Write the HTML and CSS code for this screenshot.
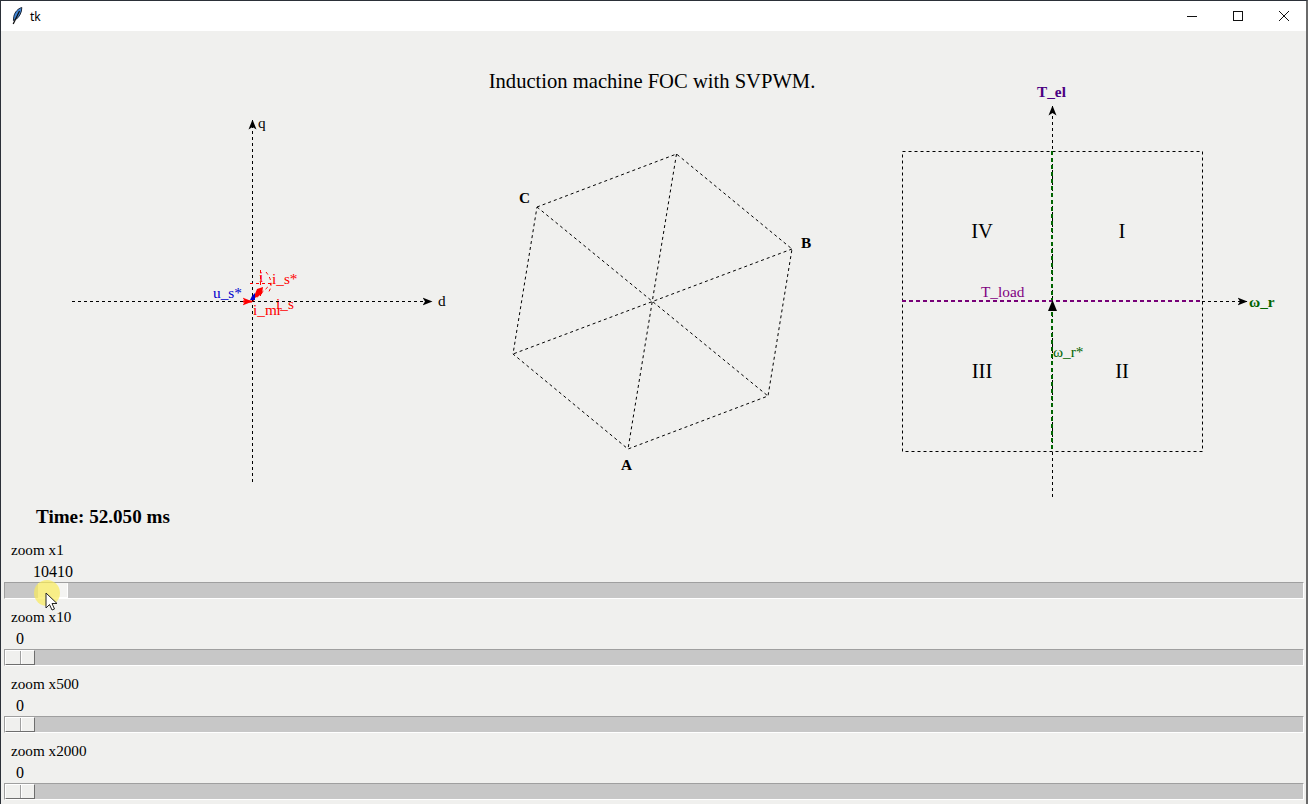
FILE: index.html
```html
<!DOCTYPE html>
<html lang="en">
<head>
<meta charset="utf-8">
<title>tk</title>
<link rel="stylesheet" href="styles.css">
</head>
<body>
<div class="window">
  <header class="titlebar">
    <svg class="feather" width="12" height="18" viewBox="0 0 12 18">
      <path d="M10.8 0.5 C7 1.5 3.8 5 2.8 9.5 L2.4 13.5 L5.5 12 C8.5 9.5 10.8 5.5 10.8 0.5 Z" fill="#3f86d8" stroke="#1d2636" stroke-width="1"/>
      <path d="M8.5 4 L2.2 17" stroke="#111" stroke-width="1.3" fill="none"/>
    </svg>
    <span class="app-name">tk</span>
    <div class="win-buttons">
      <svg class="win-btn" width="46" height="30" viewBox="0 0 46 30"><path d="M18 15.5 H28" stroke="#111" fill="none"/></svg>
      <svg class="win-btn" width="46" height="30" viewBox="0 0 46 30"><rect x="18.5" y="10.5" width="9" height="9" stroke="#111" fill="none"/></svg>
      <svg class="win-btn" width="46" height="30" viewBox="0 0 46 30"><path d="M18 10 L28 20 M28 10 L18 20" stroke="#111" fill="none"/></svg>
    </div>
  </header>
  <svg class="canvas" width="1305" height="478" viewBox="1 31 1305 478">
    <defs>
      <marker id="arrow" viewBox="0 0 10 10" markerWidth="10" markerHeight="10" refX="9.5" refY="5" orient="auto" markerUnits="userSpaceOnUse">
        <path d="M0 1 L10 5 L0 9 L2.5 5 Z" fill="#000"/>
      </marker>
      <marker id="arrow-red" viewBox="0 0 10 10" markerWidth="10" markerHeight="10" refX="9.5" refY="5" orient="auto" markerUnits="userSpaceOnUse">
        <path d="M0 1 L10 5 L0 9 L2.5 5 Z" fill="#f00"/>
      </marker>
    </defs>
    <text class="t-title" x="652" y="88" text-anchor="middle">Induction machine FOC with SVPWM.</text>

    <!-- dq frame -->
    <line class="dash" x1="72" y1="301.5" x2="432" y2="301.5" marker-end="url(#arrow)"/>
    <line class="dash" x1="252.5" y1="482" x2="252.5" y2="120" marker-end="url(#arrow)"/>
    <text class="t-axis" x="258" y="128">q</text>
    <text class="t-axis" x="438" y="306">d</text>
    <line class="dash-red" x1="252.5" y1="301.5" x2="271" y2="284"/>
    <line class="dash-red" x1="260.5" y1="270" x2="260.5" y2="296"/>
    <line class="dash-red" x1="250" y1="283.5" x2="271" y2="283.5"/>
    <path class="dash-red" d="M266 272 Q275 283 268 293"/>
    <polygon class="fill-red" points="253,299 257,289 263,287 262,294"/>
    <line class="vec-red" x1="243" y1="301.5" x2="252" y2="301.5" marker-end="url(#arrow-red)"/>
    <polygon class="fill-blue" points="255,293 255,300 250,300 252,296"/>
    <text class="t-small blue" x="213" y="298">u_s*</text>
    <text class="t-small red" x="272" y="284">i_s*</text>
    <text class="t-small red" x="259" y="282">i</text>
    <text class="t-small red" x="253" y="315">i_mr</text>
    <text class="t-small red" x="276" y="309">i_s</text>

    <!-- hexagon -->
    <polygon class="dash" points="537,207 676.5,154 792,249 768,396 628,449 513,354"/>
    <line class="dash" x1="537" y1="207" x2="768" y2="396"/>
    <line class="dash" x1="676.5" y1="154" x2="628" y2="449"/>
    <line class="dash" x1="792" y1="249" x2="513" y2="354"/>
    <text class="t-axis bold" x="519" y="203">C</text>
    <text class="t-axis bold" x="801" y="248">B</text>
    <text class="t-axis bold" x="621" y="470">A</text>

    <!-- torque / speed quadrants -->
    <rect class="dash" x="902.5" y="151.5" width="300" height="300"/>
    <line class="dash" x1="1052.5" y1="497" x2="1052.5" y2="106" marker-end="url(#arrow)"/>
    <line class="dash" x1="1202" y1="301.5" x2="1247" y2="301.5" marker-end="url(#arrow)"/>
    <line class="dash-green" x1="1052" y1="151" x2="1052" y2="451"/>
    <line class="dash-purple" x1="902" y1="301" x2="1202" y2="301"/>
    <path d="M1052.5 300 L1057 311 L1048 311 Z" fill="#000"/>
    <text class="t-axis bold purple-dark" x="1037" y="97">T_el</text>
    <text class="t-axis bold green" x="1249" y="307">ω_r</text>
    <text class="t-small purple" x="981" y="297">T_load</text>
    <text class="t-small green" x="1053" y="357">ω_r*</text>
    <text class="t-quad" x="982" y="238" text-anchor="middle">IV</text>
    <text class="t-quad" x="1122" y="238" text-anchor="middle">I</text>
    <text class="t-quad" x="982" y="378" text-anchor="middle">III</text>
    <text class="t-quad" x="1122" y="378" text-anchor="middle">II</text>
  </svg>
  <div class="time">Time: 52.050 ms</div>
  <section class="scale">
    <div class="scale-label">zoom x1</div>
    <div class="scale-value first">10410</div>
    <div class="trough"><div class="thumb first"></div></div>
  </section>
  <section class="scale">
    <div class="scale-label">zoom x10</div>
    <div class="scale-value">0</div>
    <div class="trough"><div class="thumb"></div></div>
  </section>
  <section class="scale">
    <div class="scale-label">zoom x500</div>
    <div class="scale-value">0</div>
    <div class="trough"><div class="thumb"></div></div>
  </section>
  <section class="scale">
    <div class="scale-label">zoom x2000</div>
    <div class="scale-value">0</div>
    <div class="trough"><div class="thumb"></div></div>
  </section>
  <div class="cursor-halo"></div>
  <svg class="cursor" width="14" height="20" viewBox="0 0 14 20">
    <path d="M1 1 V16 L4.5 12.5 L7 18 L9.5 17 L7 11.5 H12 Z" fill="#fff" stroke="#222" stroke-width="1"/>
  </svg>
</div>
</body>
</html>
```
FILE: styles.css
```css
* { box-sizing: border-box; }
html, body { margin: 0; padding: 0; height: 100%; overflow: hidden; }
body { background: #f0f0ee; font-family: "Liberation Serif", "Times New Roman", serif; color: #000; }
.window {
  position: relative;
  width: 1308px;
  height: 804px;
  border: 1px solid #2b3038;
  border-bottom: 0;
  border-right: 2px solid #6a6a6a;
  background: #f0f0ee;
  display: flex;
  flex-direction: column;
  overflow: hidden;
}
.titlebar {
  height: 30px;
  flex: none;
  background: #fff;
  display: flex;
  align-items: center;
  padding-left: 10px;
}
.feather { margin-right: 7px; }
.app-name { font: 12px "Noto Sans", "Open Sans", sans-serif; }
.win-buttons { margin-left: auto; display: flex; margin-right: -1px; }
.win-btn { display: block; }
.canvas { display: block; flex: none; }
.dash { fill: none; stroke: #000; stroke-width: 1; stroke-dasharray: 3 3; }
.dash-red { fill: none; stroke: #f00; stroke-width: 1; stroke-dasharray: 3 3; }
.dash-green { fill: none; stroke: #006400; stroke-width: 2; stroke-dasharray: 4 3; }
.dash-purple { fill: none; stroke: #770077; stroke-width: 2; stroke-dasharray: 4 3; }
.vec-red { stroke: #f00; stroke-width: 2; }
.fill-red { fill: #f00; }
.fill-blue { fill: #0000cd; }
.t-title { font-size: 20.6px; }
.t-axis { font-size: 15.3px; }
.t-quad { font-size: 20.6px; }
.t-small { font-size: 15.3px; }
.bold { font-weight: 700; }
.blue { fill: #0000cd; }
.red { fill: #f00; }
.green { fill: #006400; }
.purple { fill: #800080; }
.purple-dark { fill: #4b0082; }
.time { font-size: 19.1px; font-weight: 700; padding-left: 35px; height: 28px; line-height: 20px; margin-top: -2px; margin-bottom: 1px; }
.scale { height: 67px; flex: none; display: flex; flex-direction: column; padding-left: 3px; padding-right: 2px; }
.scale-label { font-size: 15.2px; height: 21px; line-height: 21px; padding-left: 7px; margin-top: 3px; margin-bottom: 1px; }
.scale-value { font-size: 16px; height: 21px; line-height: 21px; padding-left: 12px; }
.scale-value.first { padding-left: 29px; }
.trough {
  height: 17px;
  background: #c7c7c7;
  border-top: 1px solid #9f9f9f;
  border-left: 1px solid #9f9f9f;
  border-bottom: 1px solid #fff;
  border-right: 1px solid #fff;
  display: flex;
}
.thumb {
  width: 30px;
  height: 15px;
  background: linear-gradient(to right, #f0f0ee 14px, #9f9f9f 14px, #9f9f9f 15px, #fff 15px, #fff 16px, #f0f0ee 16px);
  border-top: 1px solid #fff;
  border-left: 1px solid #fff;
  border-right: 1px solid #6e6e6e;
  border-bottom: 1px solid #6e6e6e;
}
.thumb.first {
  margin-left: 33px;
  background: #f4f4f2;
  border-color: #f4f4f2 #fff #fff #f4f4f2;
}
.cursor-halo {
  position: absolute;
  left: 33px;
  top: 579px;
  width: 26px;
  height: 26px;
  border-radius: 50%;
  background: rgba(250, 235, 90, 0.7);
}
.cursor { position: absolute; left: 44px; top: 591px; }
```
